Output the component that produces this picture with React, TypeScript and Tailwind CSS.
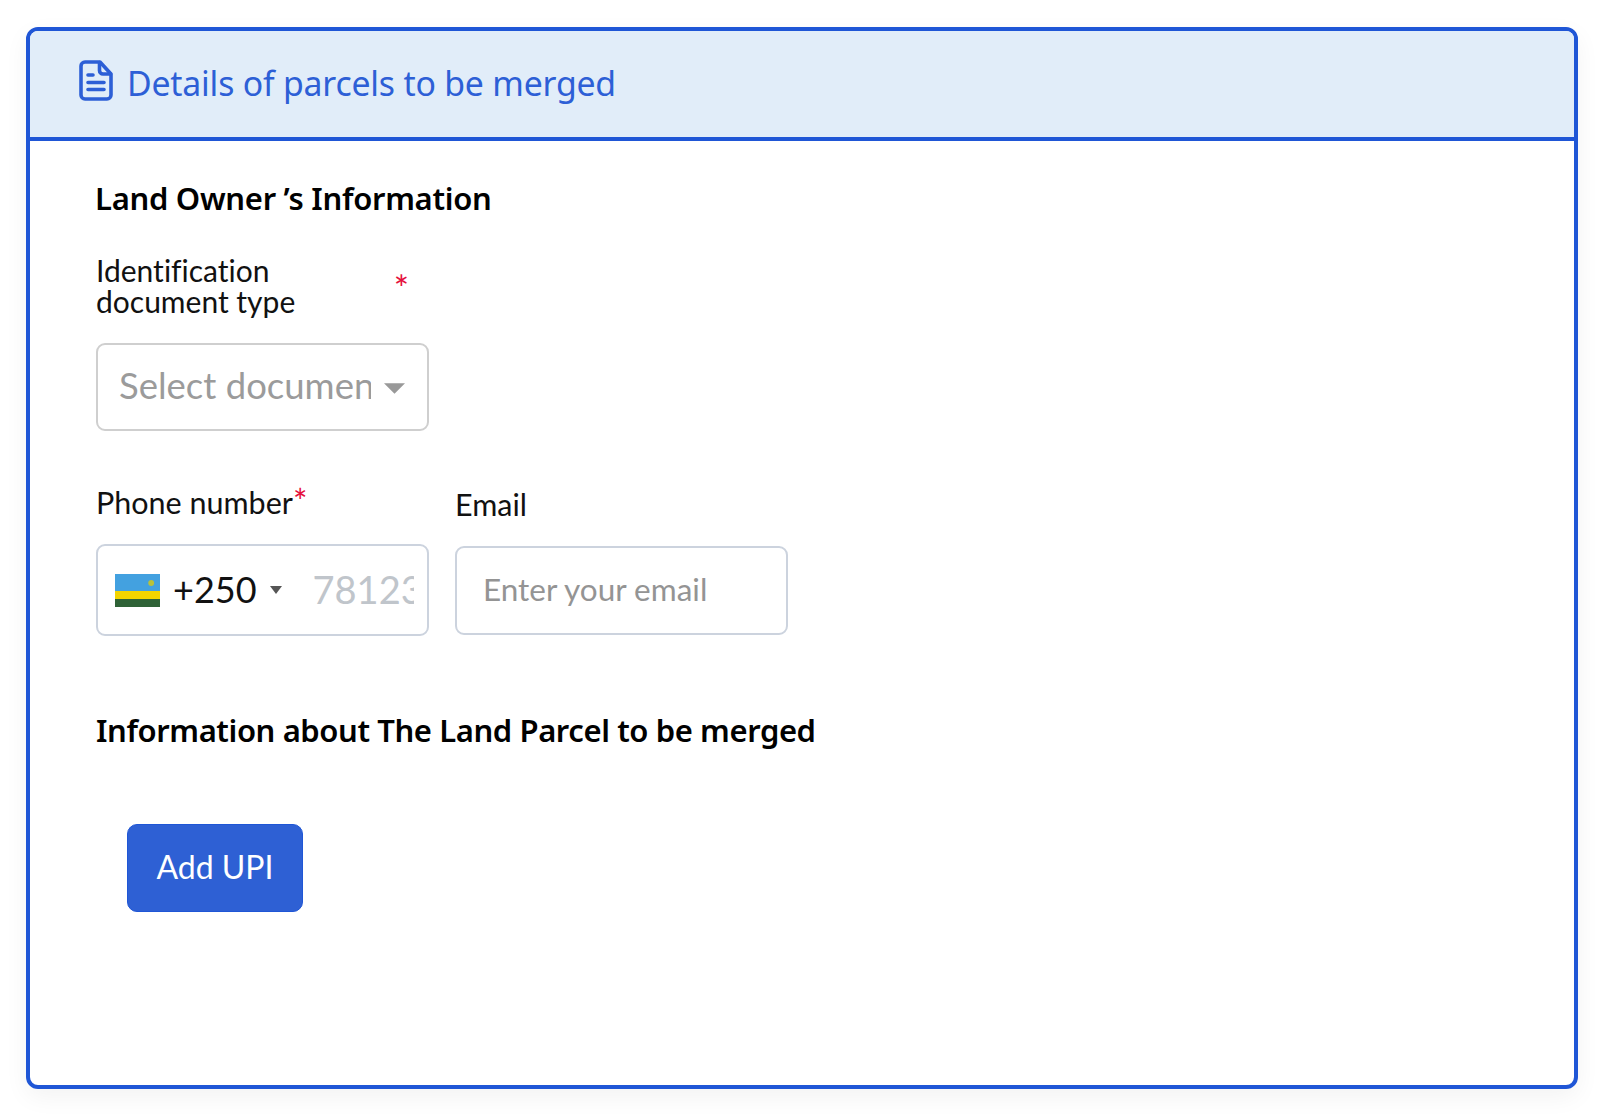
import { ReactNode } from 'react'

function DocIcon() {
	return (
		<svg width="34" height="41" viewBox="0 0 34 41" fill="none" stroke="#2d5fd6" strokeWidth="3.6" strokeLinejoin="round" strokeLinecap="round" className="mb-[6px] shrink-0">
			<path d="M6 2h15l11 12v21a4 4 0 0 1-4 4H6a4 4 0 0 1-4-4V6a4 4 0 0 1 4-4z" />
			<path d="M20.5 2.5v8a3.5 3.5 0 0 0 3.5 3.5h7.5" />
			<path d="M9 15h5M9 22.5h16M9 29.5h16" />
		</svg>
	)
}

function Flag() {
	return (
		<svg width="45" height="33" viewBox="0 0 46 33" preserveAspectRatio="none" className="shrink-0">
			<rect width="46" height="19" fill="#43a1e0" />
			<rect y="17" width="46" height="8" fill="#f3d400" />
			<rect y="25" width="46" height="8" fill="#2f6237" />
			<circle cx="37" cy="9" r="3" fill="#b9c23a" />
		</svg>
	)
}

function Label({ children, className = '' }: { children: ReactNode; className?: string }) {
	return <div className={`leading-[31px] text-[#111] [font-variant-ligatures:none] ${className}`}>{children}</div>
}

export default function App() {
	return (
		<div className="h-[1115px] bg-white pt-[27px] pl-[26px] pr-[22px] font-['Lato','Liberation_Sans',sans-serif] overflow-hidden">
			<div className="h-[1062px] rounded-[12px] border-[4px] border-[#1f56d6] bg-white shadow-[0_8px_24px_rgba(0,0,0,0.05)] overflow-hidden">
				<div className="h-[110px] flex items-center gap-[14px] pl-[49px] pb-[2px] bg-[#e1edf9] border-b-[4px] border-[#1f56d6]">
					<DocIcon />
					<span className="text-[33.8px] text-[#2d5fd6] font-['Noto_Sans','Liberation_Sans',sans-serif] tracking-[-0.2px]">Details of parcels to be merged</span>
				</div>

				<div className="pl-[66px] pt-[38px]">
					<h2 className="-ml-px text-[31px] leading-[38px] font-semibold text-black font-['Noto_Sans','Liberation_Sans',sans-serif] tracking-[-0.3px]">Land Owner ’s Information</h2>

					<div className="w-[333px] mt-[38px]">
						<div className="flex justify-between">
							<Label className="text-[30px]">
								Identification
								<br />
								document type
							</Label>
							<span className="text-[#e5103c] text-[36px] leading-[31px] mr-[20px] mt-[18px]">*</span>
						</div>
						<div className="mt-[26px] h-[88px] flex items-center pl-[21px] pr-[22px] rounded-[9px] border-2 border-[#cfcfcf]">
							<div className="w-[252px] pb-[4px] overflow-hidden whitespace-nowrap text-[36.5px] text-[#9b9b9b]">Select document type</div>
							<svg width="21" height="11" viewBox="0 0 20 10" className="ml-[13px] mt-[2px] shrink-0">
								<path d="M0 0h20L10 10z" fill="#999" />
							</svg>
						</div>
					</div>

					<div className="flex gap-[26px] mt-[56px]">
						<div className="w-[333px]">
							<Label className="text-[30.5px]">
								Phone number<span className="text-[#e5103c] text-[34px] leading-[0]">*</span>
							</Label>
							<div className="mt-[26px] h-[92px] flex items-center pl-[17px] rounded-[9px] border-2 border-[#ccd3de]">
								<Flag />
								<span className="ml-[13px] pb-[2px] text-[36px] text-[#111]">+250</span>
								<svg width="12" height="8" viewBox="0 0 12 8" className="ml-[13px]">
									<path d="M0 0h12L6 8z" fill="#555" />
								</svg>
								<div className="ml-[31px] w-[101px] pb-[2px] overflow-hidden whitespace-nowrap text-[38px] text-[#c0c5cb]">781234567</div>
							</div>
						</div>
						<div className="w-[333px] pt-[2px]">
							<Label className="text-[30.5px]">Email</Label>
							<input
								readOnly
								placeholder="Enter your email"
								className="mt-[26px] block w-full h-[89px] px-[26px] pb-[3px] rounded-[9px] border-2 border-[#ccd3de] text-[31.5px] outline-none placeholder:text-[#949494]"
							/>
						</div>
					</div>

					<h2 className="mt-[75px] text-[31px] leading-[38px] font-semibold text-black font-['Noto_Sans','Liberation_Sans',sans-serif] tracking-[-0.41px]">Information about The Land Parcel to be merged</h2>

					<button className="mt-[75px] ml-[31px] block w-[176px] h-[88px] pb-[2px] rounded-[10px] bg-[#2e60d4] border border-[#1f56d6] text-white text-[32px]">Add UPI</button>
				</div>
			</div>
		</div>
	)
}
